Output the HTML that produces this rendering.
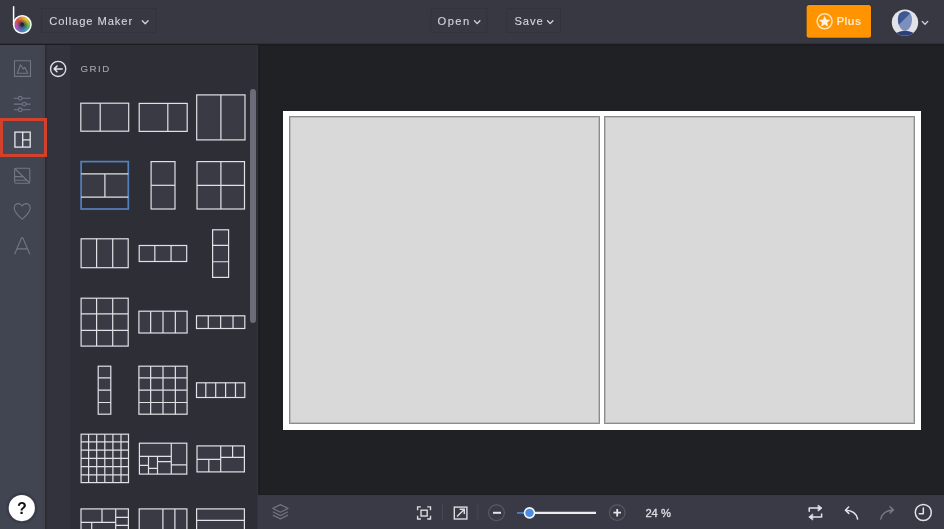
<!DOCTYPE html>
<html><head><meta charset="utf-8">
<style>
html,body{margin:0;padding:0;}
body{width:944px;height:529px;overflow:hidden;position:relative;background:#202125;font-family:"Liberation Sans",sans-serif;}
.abs{position:absolute;}
#top{left:0;top:0;width:944px;height:44px;background:#383843;}
#topline{left:0;top:43px;width:944px;height:3px;background:linear-gradient(#2e2f37 0,#2e2f37 33%,#1b1c21 34%,#1d1e23 100%);}
#side{left:0;top:45px;width:42px;height:484px;background:#414552;}
#sidestrip{left:42px;top:45px;width:3px;height:484px;background:#41424c;}
#panel{left:45px;top:45px;width:213px;height:484px;background:#2d2e36;box-shadow:inset -1px 0 0 #33333b;}
#panelcol{left:45px;top:45px;width:25px;height:484px;background:#33333d;border-left:2px solid #2c2c34;box-sizing:border-box;}
#canvasbg{left:258px;top:46px;width:686px;height:449px;background:#202125;border-left:2px solid #1d1e25;box-sizing:border-box;}
#bline{left:258px;top:494px;width:686px;height:1px;background:#1c1d22;}
#bottom{left:258px;top:495px;width:686px;height:34px;background:#393a45;}
#frame{left:283px;top:111px;width:638px;height:319px;background:#fff;}
.cell{position:absolute;top:5px;width:309px;height:306px;background:#d9d9d9;border:1px solid #8c8c8c;box-shadow:inset 0 0 0 1px #bcbcbc;}
#scroll{left:250px;top:89px;width:6px;height:234px;border-radius:3px;background:#6b6c78;}
#redbox{left:0;top:118.4px;width:41px;height:33px;border:3px solid #d2412c;background:#454955;}
svg{position:absolute;left:0;top:0;will-change:transform;}
</style></head>
<body>
<div class="abs" id="top"></div>
<div class="abs" id="topline"></div>
<div class="abs" id="side"></div>
<div class="abs" id="sidestrip"></div>
<div class="abs" id="panel"></div>
<div class="abs" id="panelcol"></div>
<div class="abs" id="canvasbg"></div>
<div class="abs" id="bline"></div><div class="abs" id="bottom"></div>
<div class="abs" id="frame"><div class="cell" style="left:6px"></div><div class="cell" style="left:321px"></div></div>
<div class="abs" id="scroll"></div>
<div class="abs" id="redbox"></div>
<div class="abs" style="left:13.7px;top:15.9px;width:17.2px;height:17.2px;border-radius:50%;background:radial-gradient(circle,rgba(40,30,50,0.9) 0,rgba(40,30,50,0.5) 22%,rgba(40,30,50,0) 50%),conic-gradient(from -50deg,#d9503c,#e58a3a,#e9c23a,#a9c83c,#55b46a,#3f9db8,#5577c0,#8a62b8,#c0559c,#d9503c);"></div>
<svg width="944" height="529" viewBox="0 0 944 529">
<defs>
<clipPath id="panelclip"><rect x="45" y="45" width="205" height="484"/></clipPath>
</defs>
<!-- logo -->
<g>

</g>

<circle cx="22.1" cy="24.4" r="1.9" fill="#2a2430"/>
<circle cx="22.3" cy="24.5" r="8.7" fill="none" stroke="#fff" stroke-width="1.5"/>
<path d="M13.6 6.8V24.5" stroke="#fff" stroke-width="1.5" stroke-linecap="round" fill="none"/>
<!-- top buttons -->
<rect x="41.5" y="8.5" width="114.5" height="24" fill="none" stroke="#33333d" stroke-width="1"/>
<rect x="431" y="8.5" width="56" height="24" fill="none" stroke="#33333d" stroke-width="1"/>
<rect x="507" y="8.5" width="53.5" height="24" fill="none" stroke="#33333d" stroke-width="1"/>
<g fill="#d4d5da" stroke="#d4d5da" stroke-width="0.12" font-family="Liberation Sans, sans-serif" font-size="11.2" letter-spacing="0.9">
<text x="49.2" y="25.3">Collage Maker</text>
<text x="437.5" y="25" letter-spacing="1.45">Open</text>
<text x="514.5" y="25">Save</text>
</g>
<g stroke="#d4d5da" stroke-width="1.3" fill="none" stroke-linecap="round" stroke-linejoin="round">
<path d="M142.3 20.8L145.2 23.8L148.1 20.8"/>
<path d="M474.5 20.8L477.2 23.6L479.9 20.8"/>
<path d="M547.5 20.8L550.2 23.6L552.9 20.8"/>
<path d="M922.2 21.4L925 24.3L927.8 21.4"/>
</g>
<!-- plus button -->
<rect x="806.2" y="4.6" width="65.2" height="33.6" rx="3" fill="#2a2320" opacity="0.6"/><rect x="806.6" y="4.9" width="64.4" height="32.8" rx="2.5" fill="#ff9400"/>
<circle cx="824.6" cy="21.3" r="7.5" fill="none" stroke="#ffe2b4" stroke-width="1.6"/>
<path d="M824.60 16.50L826.01 19.86L829.64 20.16L826.88 22.54L827.72 26.09L824.60 24.20L821.48 26.09L822.32 22.54L819.56 20.16L823.19 19.86Z" fill="#fff4e4" stroke="#fff4e4" stroke-width="0.6" stroke-linejoin="round"/>
<text x="836.4" y="25.1" fill="#ffe5bd" font-family="Liberation Sans, sans-serif" font-weight="bold" font-size="11.6" letter-spacing="0.1">Plus</text>
<!-- avatar -->
<circle cx="905" cy="22.6" r="13.2" fill="#e2e2e9"/>
<clipPath id="avclip"><circle cx="905" cy="22.6" r="13.2"/></clipPath>
<clipPath id="headclip"><path d="M905 11.2C909.6 11.2 912 14.8 912 19.4C912 25 908.6 31 905 31C901.4 31 897.9 25 897.9 19.4C897.9 14.8 900.4 11.2 905 11.2Z"/></clipPath>
<g clip-path="url(#avclip)">
<path d="M905 11.2C909.6 11.2 912 14.8 912 19.4C912 25 908.6 31 905 31C901.4 31 897.9 25 897.9 19.4C897.9 14.8 900.4 11.2 905 11.2Z" fill="#7c8fbd"/>
<path d="M895 28.5L913.5 10L895 10Z" fill="#3f5793" clip-path="url(#headclip)"/>
<path d="M893 37C894.5 33 899 31 905 31C911 31 915.5 33 917 37Z" fill="#2e3f77"/>
</g>
<!-- sidebar icons -->
<g stroke="#737683" stroke-width="1.1" fill="none" stroke-linejoin="round">
<rect x="14.5" y="60.8" width="16" height="15.6"/>
<path d="M17.3 73.2L20.5 64.8L23.2 69L24.8 67.3L27.8 73.2Z"/>
<path d="M13.8 98.3H30.5M13.8 104.1H30.5M13.8 109.8H30.5"/>
<circle cx="20.2" cy="98.3" r="1.9" fill="#434652"/>
<circle cx="24.2" cy="104.1" r="1.9" fill="#434652"/>
<circle cx="20.2" cy="109.8" r="1.9" fill="#434652"/>
<rect x="14.6" y="168.3" width="15.2" height="14.9" rx="1.5"/>
<path d="M14.8 168.5L29.6 183M14.8 176.6H23M14.8 180.3H26.7"/>
<path d="M22.2 219.2C18.5 215.8 14.2 212.4 14.2 208C14.2 205.2 16.3 203.6 18.5 203.6C20.3 203.6 21.5 204.7 22.2 206C22.9 204.7 24.1 203.6 25.9 203.6C28.1 203.6 30.2 205.2 30.2 208C30.2 212.4 25.9 215.8 22.2 219.2Z"/>
<path d="M14.6 254.2L21.6 237.8H22.8L29.8 254.2M17.1 248.9H27.3"/>
</g>
<!-- active grid icon -->
<g stroke="#e8e8ec" stroke-width="1.3" fill="none">
<rect x="14.9" y="132.1" width="15.3" height="15"/>
<path d="M22.7 132.1V147.1M22.7 139.9H30.2"/>
</g>
<!-- help -->
<circle cx="21.8" cy="508.1" r="15.5" fill="#363945" opacity="0.7"/><circle cx="21.8" cy="508.1" r="13.1" fill="#fff"/>
<text x="21.9" y="513.7" fill="#111" font-family="Liberation Sans, sans-serif" font-weight="bold" font-size="16" text-anchor="middle">?</text>
<!-- panel header -->
<circle cx="58.15" cy="68.9" r="7.6" fill="none" stroke="#e0e0e4" stroke-width="1.35"/>
<path d="M54.2 68.9H62.2M57 66.1L54.2 68.9L57 71.7" stroke="#e4e4e8" stroke-width="1.5" fill="none" stroke-linecap="round" stroke-linejoin="round"/>
<text x="80.6" y="71.65" fill="#a6a7af" stroke="#a6a7af" stroke-width="0.12" font-family="Liberation Sans, sans-serif" font-size="9.7" letter-spacing="1.45">GRID</text>
<!-- thumbs -->
<g clip-path="url(#panelclip)">
<rect x="80.80" y="103.20" width="47.90" height="28.00" fill="#3a3a44" stroke="#e2e2e6" stroke-width="1.2"/>
<path d="M100.20 103.20V131.20" stroke="#e2e2e6" stroke-width="1.2" fill="none"/>
<rect x="139.20" y="103.40" width="48.00" height="28.00" fill="#3a3a44" stroke="#e2e2e6" stroke-width="1.2"/>
<path d="M167.80 103.40V131.40" stroke="#e2e2e6" stroke-width="1.2" fill="none"/>
<rect x="196.70" y="94.90" width="48.30" height="45.00" fill="#3a3a44" stroke="#e2e2e6" stroke-width="1.2"/>
<path d="M220.90 94.90V139.90" stroke="#e2e2e6" stroke-width="1.2" fill="none"/>
<rect x="81.10" y="161.60" width="47.20" height="47.40" fill="#2b2c34" stroke="none"/>
<rect x="81.10" y="173.90" width="47.20" height="23.30" fill="#3a3a44"/>
<rect x="81.10" y="161.60" width="47.20" height="47.40" fill="none" stroke="#5581bd" stroke-width="1.7"/>
<path d="M81.10 173.90H128.30M81.10 197.20H128.30M104.90 174.50V196.60" stroke="#e2e2e6" stroke-width="1.2" fill="none"/>
<rect x="151.10" y="161.60" width="23.90" height="47.40" fill="#3a3a44" stroke="#e2e2e6" stroke-width="1.2"/>
<path d="M151.10 185.30H175.00" stroke="#e2e2e6" stroke-width="1.2" fill="none"/>
<rect x="197.00" y="161.60" width="47.50" height="47.40" fill="#3a3a44" stroke="#e2e2e6" stroke-width="1.2"/>
<path d="M220.90 161.60V209.00M197.00 185.30H244.50" stroke="#e2e2e6" stroke-width="1.2" fill="none"/>
<rect x="81.10" y="238.80" width="47.10" height="28.90" fill="#3a3a44" stroke="#e2e2e6" stroke-width="1.2"/>
<path d="M96.60 238.80V267.70M112.70 238.80V267.70" stroke="#e2e2e6" stroke-width="1.2" fill="none"/>
<rect x="139.20" y="245.50" width="47.50" height="16.00" fill="#3a3a44" stroke="#e2e2e6" stroke-width="1.2"/>
<path d="M154.83 245.50V261.50M171.07 245.50V261.50" stroke="#e2e2e6" stroke-width="1.2" fill="none"/>
<rect x="212.60" y="229.80" width="16.00" height="47.60" fill="#3a3a44" stroke="#e2e2e6" stroke-width="1.2"/>
<path d="M212.60 245.47H228.60M212.60 261.73H228.60" stroke="#e2e2e6" stroke-width="1.2" fill="none"/>
<rect x="81.10" y="298.20" width="47.10" height="47.90" fill="#3a3a44" stroke="#e2e2e6" stroke-width="1.2"/>
<path d="M96.60 298.20V346.10M112.70 298.20V346.10M81.10 313.97H128.20M81.10 330.33H128.20" stroke="#e2e2e6" stroke-width="1.2" fill="none"/>
<rect x="138.90" y="311.20" width="48.20" height="21.80" fill="#3a3a44" stroke="#e2e2e6" stroke-width="1.2"/>
<path d="M150.65 311.20V333.00M163.00 311.20V333.00M175.35 311.20V333.00" stroke="#e2e2e6" stroke-width="1.2" fill="none"/>
<rect x="196.50" y="315.80" width="48.30" height="12.70" fill="#3a3a44" stroke="#e2e2e6" stroke-width="1.2"/>
<path d="M208.28 315.80V328.50M220.65 315.80V328.50M233.03 315.80V328.50" stroke="#e2e2e6" stroke-width="1.2" fill="none"/>
<rect x="98.20" y="366.20" width="12.60" height="48.00" fill="#3a3a44" stroke="#e2e2e6" stroke-width="1.2"/>
<path d="M98.20 377.90H110.80M98.20 390.20H110.80M98.20 402.50H110.80" stroke="#e2e2e6" stroke-width="1.2" fill="none"/>
<rect x="138.90" y="366.20" width="48.20" height="48.00" fill="#3a3a44" stroke="#e2e2e6" stroke-width="1.2"/>
<path d="M150.65 366.20V414.20M163.00 366.20V414.20M175.35 366.20V414.20M138.90 377.90H187.10M138.90 390.20H187.10M138.90 402.50H187.10" stroke="#e2e2e6" stroke-width="1.2" fill="none"/>
<rect x="196.50" y="382.80" width="48.30" height="14.70" fill="#3a3a44" stroke="#e2e2e6" stroke-width="1.2"/>
<path d="M205.80 382.80V397.50M215.70 382.80V397.50M225.60 382.80V397.50M235.50 382.80V397.50" stroke="#e2e2e6" stroke-width="1.2" fill="none"/>
<rect x="81.10" y="434.20" width="47.40" height="48.40" fill="#3a3a44" stroke="#e2e2e6" stroke-width="1.2"/>
<path d="M88.60 434.20V482.60M96.70 434.20V482.60M104.80 434.20V482.60M112.90 434.20V482.60M121.00 434.20V482.60M81.10 441.87H128.50M81.10 450.13H128.50M81.10 458.40H128.50M81.10 466.67H128.50M81.10 474.93H128.50" stroke="#e2e2e6" stroke-width="1.2" fill="none"/>
<rect x="139.40" y="443.20" width="47.40" height="30.90" fill="#3a3a44" stroke="#e2e2e6" stroke-width="1.2"/>
<path d="M171.30 443.20V474.10M139.40 456.30H170.70M148.50 456.90V474.10M157.50 456.90V474.10M139.40 465.40H147.90M149.10 468.40H156.90M158.10 461.70H170.70M171.90 464.80H186.80" stroke="#e2e2e6" stroke-width="1.2" fill="none"/>
<rect x="197.00" y="445.90" width="47.40" height="26.00" fill="#3a3a44" stroke="#e2e2e6" stroke-width="1.2"/>
<path d="M220.70 445.90V471.90M197.00 459.30H220.10M208.80 459.90V471.90M221.30 457.40H244.40M232.60 445.90V456.80" stroke="#e2e2e6" stroke-width="1.2" fill="none"/>
<rect x="81.00" y="508.90" width="47.40" height="47.50" fill="#3a3a44" stroke="#e2e2e6" stroke-width="1.2"/>
<path d="M102.00 508.90V521.80M115.70 508.90V556.40M81.00 522.40H115.10M116.30 517.30H128.40M116.30 525.40H128.40M91.70 523.00V556.40" stroke="#e2e2e6" stroke-width="1.2" fill="none"/>
<rect x="139.20" y="508.90" width="47.70" height="47.50" fill="#3a3a44" stroke="#e2e2e6" stroke-width="1.2"/>
<path d="M162.90 508.90V556.40M174.90 508.90V556.40" stroke="#e2e2e6" stroke-width="1.2" fill="none"/>
<rect x="196.60" y="508.90" width="47.80" height="47.50" fill="#3a3a44" stroke="#e2e2e6" stroke-width="1.2"/>
<path d="M196.60 520.40H244.40" stroke="#e2e2e6" stroke-width="1.2" fill="none"/>
</g>
<!-- bottom toolbar icons -->
<g stroke="#6f717d" stroke-width="1.2" fill="none" stroke-linejoin="round">
<path d="M280.4 504.6L288 508.4L280.4 512.2L272.8 508.4Z"/>
<path d="M272.8 511.8L280.4 515.6L288 511.8M272.8 515.1L280.4 518.9L288 515.1"/>
</g>
<g stroke="#dcdce0" stroke-width="1.4" fill="none">
<path d="M417.6 510.2V506.9H420.9M427.2 506.9H430.5V510.2M430.5 515.8V519H427.2M420.9 519H417.6V515.8"/>
<rect x="421" y="510.2" width="6.2" height="5.8"/>
<rect x="454.3" y="507.1" width="12.6" height="11.9"/>
<path d="M457 516.4L464.2 509.4M459.6 509.3H464.3V514"/>
</g>
<path d="M442.5 504V519.6M477.8 504V519.6" stroke="#474955" stroke-width="1"/>
<circle cx="496.5" cy="512.8" r="7.9" fill="none" stroke="#585a66" stroke-width="1.1"/>
<path d="M493 512.8H501" stroke="#e4e4e8" stroke-width="2"/>
<circle cx="617.2" cy="512.7" r="7.8" fill="none" stroke="#585a66" stroke-width="1.1"/>
<path d="M613.4 512.7H621M617.2 508.9V516.5" stroke="#e4e4e8" stroke-width="1.8"/>
<path d="M517 512.9H529" stroke="#4a7fc6" stroke-width="1.8"/>
<path d="M529 512.9H596" stroke="#ececef" stroke-width="2.1"/>
<circle cx="529.5" cy="512.9" r="5" fill="#4a8ee0" stroke="#f4f4f6" stroke-width="1.6"/>
<g fill="#dcdce0" stroke="#dcdce0" stroke-width="0.35" font-family="Liberation Sans, sans-serif" font-size="11.2"><text x="645.4" y="517">24</text><text x="661" y="517">%</text></g>
<g stroke="#e2e2e6" stroke-width="1.5" fill="none" stroke-linecap="round" stroke-linejoin="round">
<path d="M809.2 511.2V508.1H819"/><path d="M818.4 505.3L822 508.1L818.4 510.9Z" fill="#e2e2e6" stroke-width="0.8"/>
<path d="M821.6 513.9V517H811.8"/><path d="M812.4 514.2L808.8 517L812.4 519.8Z" fill="#e2e2e6" stroke-width="0.8"/>
<path d="M857.6 519C856.5 513.5 852 510.5 845.6 510.3M848.6 507L845.4 510.3L848.8 513.4"/>
<circle cx="923.3" cy="512.5" r="8" />
<path d="M923.3 508V513.8H919.3"/>
</g>
<g stroke="#767884" stroke-width="1.5" fill="none" stroke-linecap="round" stroke-linejoin="round">
<path d="M880.8 518.9C882 513.5 886.5 510.2 893.2 509.9M890 506.7L893.3 509.9L890.2 513"/>
</g>
</svg>
</body></html>
